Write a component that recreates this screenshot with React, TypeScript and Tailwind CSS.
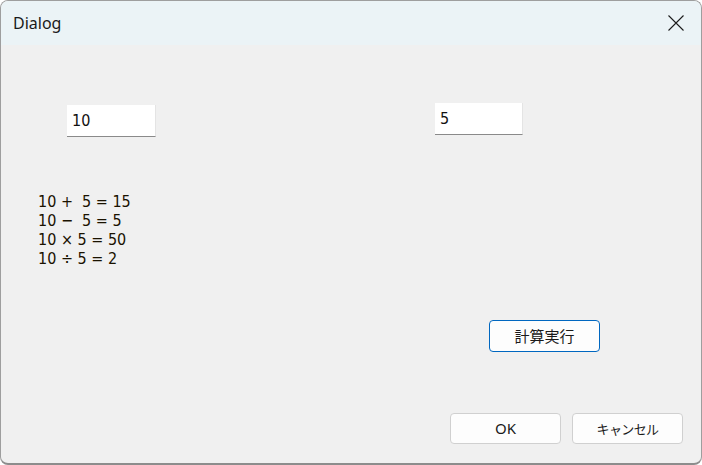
import React from 'react';

const uiFont = { fontFamily: '"Noto Sans", "Noto Sans CJK JP", sans-serif' };
const jpFont = { fontFamily: '"Noto Sans CJK JP", "Noto Sans", sans-serif' };
const labelFont = { fontFamily: '"DejaVu Sans Condensed", "DejaVu Sans", "Noto Sans CJK JP", sans-serif' };

function TextBox({ value, className }: { value: string; className: string }) {
  return (
    <div
      className={`h-[32px] bg-white border-b border-b-[#8a8a8a] border-r border-r-[#e4e4e4] flex items-center pl-[5px] text-[16px] text-[#111] ${className}`}
      style={labelFont}
    >
      {value}
    </div>
  );
}

function Button({ label, primary, className, jp }: { label: string; primary?: boolean; className: string; jp?: boolean }) {
  return (
    <button
      className={`h-[31px] rounded-[4px] bg-[#fdfdfd] flex items-center justify-center text-[#1a1a1a] ${
        primary ? 'border border-[#0067c0]' : 'border border-[#d0d0d0]'
      } ${className}`}
      style={jp ? jpFont : uiFont}
    >
      {label}
    </button>
  );
}

export default function App() {
  const lines = ['10 +  5 = 15', '10 −  5 = 5', '10 × 5 = 50', '10 ÷ 5 = 2'];

  return (
    <div className="w-[702px] h-[465px] bg-white">
      <div className="w-[702px] h-[465px] border border-[#9e9e9e] border-b-2 border-b-[#8c8c8c] rounded-[8px] overflow-hidden bg-[#f0f0f0] flex flex-col">
        {/* Title bar */}
        <div className="h-[44px] bg-[#ebf3f6] flex items-center justify-between pl-[12px] pr-[17px] shrink-0">
          <span className="text-[16px] text-[#1a1a1a] -mt-[1px]" style={uiFont}>
            Dialog
          </span>
          <svg width="16" height="16" viewBox="0 0 16 16">
            <path d="M0.5 0.5 L15.5 15.5 M15.5 0.5 L0.5 15.5" stroke="#1c1c1c" strokeWidth="1.1" fill="none" />
          </svg>
        </div>

        {/* Body */}
        <div className="flex-1 flex flex-col">
          <div className="flex items-start pt-[58px] pl-[66px]">
            <TextBox value="10" className="w-[89px] mt-[2px]" />
            <TextBox value="5" className="w-[88px] ml-[279px]" />
          </div>

          <div className="mt-[55px] pl-[37px] text-[16px] leading-[19px] text-[#1a1200]" style={labelFont}>
            {lines.map((l) => (
              <div key={l} className="whitespace-pre">
                {l}
              </div>
            ))}
          </div>

          <div className="mt-[52px] pl-[488px]">
            <Button label="計算実行" primary jp className="w-[111px] h-[32px] text-[15px]" />
          </div>

          <div className="mt-[61px] flex justify-end gap-[11px] pr-[18px]">
            <Button label="OK" className="w-[111px] text-[15px]" />
            <Button label="キャンセル" jp className="w-[111px] text-[13px] tracking-[-0.6px]" />
          </div>
        </div>
      </div>
    </div>
  );
}
